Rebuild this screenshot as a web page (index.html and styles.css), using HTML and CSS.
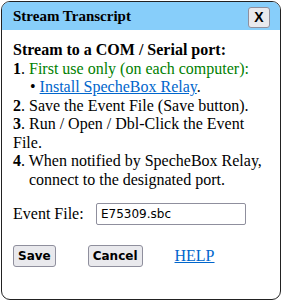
FILE: index.html
```html
<!DOCTYPE html>
<html lang="en">
<head>
    <meta charset="UTF-8">
    <title>Stream Transcript</title>
    <link rel="stylesheet" href="styles.css">
</head>
<body>

<div class="dialog">
    <div class="dialog-header">
        <span class="dialog-title">Stream Transcript</span>
        <button class="close-btn">X</button>
    </div>

    <div class="dialog-body">
        <div class="heading">Stream to a COM / Serial port:</div>
        <div class="step"><b>1</b>. <span class="green">First use only (on each computer):</span></div>
        <div class="sub">&bull; <a href="#">Install SpecheBox Relay</a>.</div>
        <div class="step"><b>2</b>. Save the Event File (Save button).</div>
        <div class="step"><b>3</b>. Run / Open / Dbl-Click the Event File.</div>
        <div class="step hang"><b>4</b>. When notified by SpecheBox Relay, connect to the designated port.</div>

        <!-- file name -->
        <div class="file-row">
            <label for="event-file">Event File:</label>
            <input type="text" id="event-file" value="E75309.sbc">
        </div>

        <div class="actions">
            <button class="button">Save</button>
            <button class="button">Cancel</button>
            <a href="#" class="help">HELP</a>
        </div>
    </div>
</div>

</body>
</html>
```

FILE: styles.css
```css
/* Styles */
body {
    margin: 0;
    padding: 1px;
    font-family: "Liberation Serif", "Times New Roman", serif;
    font-size: 16px;
}
.dialog {
    width: 278px;
    height: 297px;
    border: 1px solid #222;
    border-radius: 9px;
    overflow: hidden;
    background: #fff;
}
.dialog-header {
    display: flex;
    align-items: center;
    justify-content: space-between;
    height: 28px;
    padding: 0 10px 0 11px;
    background-color: #87cefa;
}
.dialog-title {
    font-family: "Liberation Serif", "Times New Roman", serif;
    font-weight: bold;
    font-size: 15px;
}
.close-btn {
    width: 22px;
    height: 21px;
    padding: 0;
    margin-top: 2px;
    font-family: "Liberation Sans", Arial, sans-serif;
    font-weight: bold;
    font-size: 14px;
    background: #e9e9ed;
    border: 1px solid #8f8f9d;
    border-radius: 3px;
}
.dialog-body {
    padding: 11px 10px 0 11px;
    line-height: 18.5px;
}
.heading {
    font-weight: bold;
}
.green {
    color: #008000;
}
.sub {
    padding-left: 17px;
}
.sub a, .help {
    color: #0066cc;
}
.hang {
    padding-left: 16px;
    text-indent: -16px;
}
.file-row {
    display: flex;
    align-items: center;
    margin-top: 14px;
}
.file-row label {
    width: 83px;
}
.file-row input {
    width: 150px;
    height: 22px;
    box-sizing: border-box;
    padding: 2px 4px;
    font-family: "DejaVu Sans", Verdana, sans-serif;
    font-size: 12px;
    border: 1px solid #8f8f9d;
    border-radius: 2px;
}
.actions {
    display: flex;
    align-items: center;
    margin-top: 20px;
}
.button {
    height: 22px;
    padding: 0 4px;
    margin-right: 32px;
    font-family: "DejaVu Sans", Verdana, sans-serif;
    font-weight: bold;
    font-size: 12px;
    background: #e9e9ed;
    border: 1px solid #8f8f9d;
    border-radius: 3px;
}
.help {
    margin-left: 0;
}
```
